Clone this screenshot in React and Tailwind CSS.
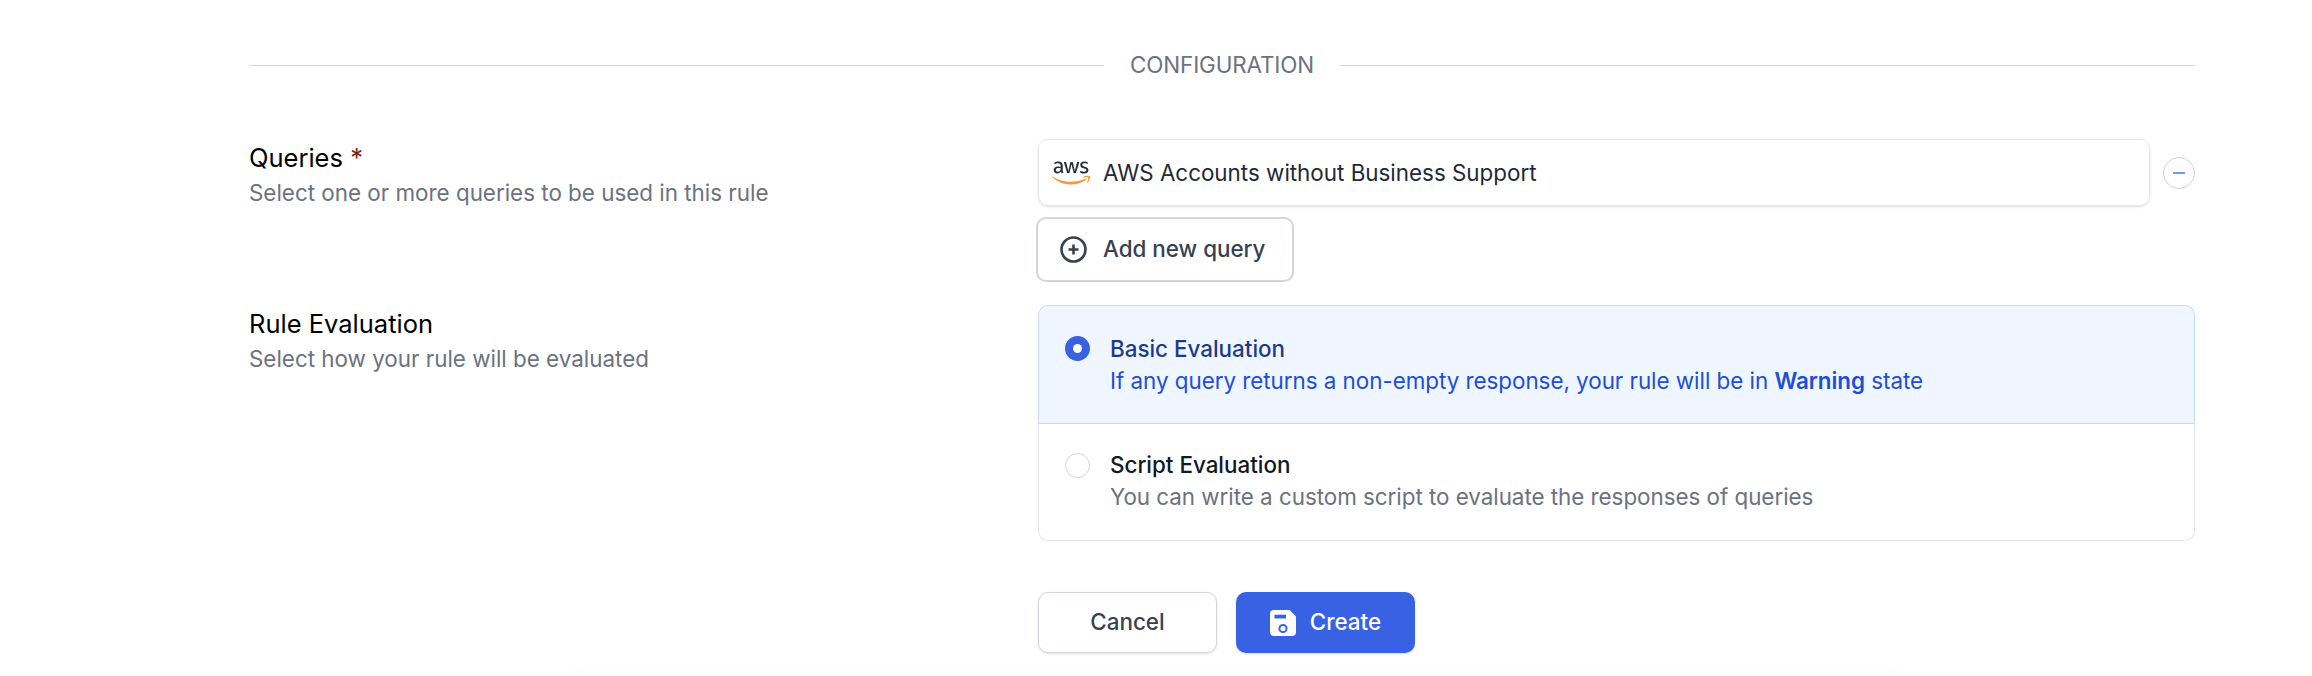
import { FaAws } from "react-icons/fa";

function Radio({ checked }) {
  return checked ? (
    <span className="mt-[3px] flex size-[25px] shrink-0 items-center justify-center rounded-full bg-[#3862e3]">
      <span className="size-[9px] rounded-full bg-white" />
    </span>
  ) : (
    <span className="mt-[4px] size-[25px] shrink-0 rounded-full border border-gray-300 bg-white" />
  );
}

function Label({ title, required, hint }) {
  return (
    <div className="w-[789px] shrink-0">
      <div className="text-[25.5px] leading-[38px] text-black">
        {title}
        {required && <span className="text-[#7f1d1d]"> *</span>}
      </div>
      <div className="text-[#6b7280] leading-[32px]">{hint}</div>
    </div>
  );
}

function SaveIcon() {
  return (
    <svg className="size-[26px]" viewBox="0 0 26 26" fill="none">
      <path d="M4 0H19.500L26 6.500V22A4 4 0 0 1 22 26H4A4 4 0 0 1 0 22V4A4 4 0 0 1 4 0Z" fill="#fff" />
      <path d="M4.500 4.700H16V8.500H4.500Z" fill="#3862e3" />
      <circle cx="13" cy="18.500" r="3.600" stroke="#3862e3" strokeWidth="2" />
    </svg>
  );
}

export default function App() {
  return (
    <div className="relative flex h-[676px] w-[2312px] flex-col overflow-hidden bg-white pl-[249px] pr-[117px] font-['Inter',sans-serif] text-[22.4px]">
      <svg className="absolute size-0">
        <linearGradient id="aws" x1="0" y1="0" x2="0" y2="1">
          <stop offset="0.600" stopColor="#252f3e" />
          <stop offset="0.600" stopColor="#f79a2f" />
        </linearGradient>
      </svg>
      <div className="absolute left-[560px] right-[400px] top-[700px] h-[80px] shadow-[0_0_50px_rgba(0,0,0,0.06)]" />

      <div className="mt-[48px] flex h-[34px] items-center">
        <div className="h-px flex-1 bg-gray-300" />
        <div className="w-[236px] text-center tracking-[-0.1px] text-[#6b7280]">CONFIGURATION</div>
        <div className="h-px flex-1 bg-gray-300" />
      </div>

      <div className="mt-[57px] flex h-[166px]">
        <Label title="Queries" required hint="Select one or more queries to be used in this rule" />
        <div className="flex flex-1 flex-col items-start">
          <div className="flex w-full items-center gap-[13px]">
            <div className="flex h-[67px] flex-1 items-center rounded-[10px] border border-gray-200 pl-[13px] text-[#1f2937] shadow-sm">
              <FaAws className="mr-[13px] h-[36px] w-[38px] fill-[url(#aws)]" />
              AWS Accounts without Business Support
            </div>
            <div className="flex size-[32px] items-center justify-center rounded-full border border-gray-300">
              <span className="h-[2px] w-[12px] bg-[#6f97f8]" />
            </div>
          </div>
          <button className="-ml-[2px] mt-[11px] flex h-[65px] w-[258px] items-center rounded-[10px] border-2 border-gray-300 pb-px pl-[22px] font-medium text-[#374151]">
            <svg className="mr-[16px] size-[27px]" viewBox="0 0 27 27" fill="none" stroke="currentColor" strokeWidth="2.600">
              <circle cx="13.500" cy="13.500" r="12" />
              <path d="M13.500 8.500V18.500M8.500 13.500H18.500" />
            </svg>
            Add new query
          </button>
        </div>
      </div>

      <div className="flex">
        <Label title="Rule Evaluation" hint="Select how your rule will be evaluated" />
        <div className="flex-1">
          <div className="flex h-[119px] gap-[20px] rounded-t-[10px] border border-[#bfdbfe] bg-[#eff6ff] pl-[26px] pt-[27px] leading-[32px]">
            <Radio checked />
            <div>
              <div className="font-medium text-[#1e3a8a]">Basic Evaluation</div>
              <div className="tracking-[-0.03px] text-[#1d4ed8]">
                If any query returns a non-empty response, your rule will be in <span className="font-semibold">Warning</span> state
              </div>
            </div>
          </div>
          <div className="flex h-[117px] gap-[20px] rounded-b-[10px] border border-t-0 border-gray-200 pl-[26px] pt-[25px] leading-[32px]">
            <Radio />
            <div>
              <div className="font-medium text-[#111827]">Script Evaluation</div>
              <div className="tracking-[-0.03px] text-[#6b7280]">You can write a custom script to evaluate the responses of queries</div>
            </div>
          </div>
          <div className="mt-[51px] flex gap-[19px] font-medium">
            <button className="flex h-[61px] w-[179px] items-center justify-center rounded-[10px] border border-gray-300 pb-[2px] text-[#374151] shadow-sm">
              Cancel
            </button>
            <button className="flex h-[61px] w-[179px] items-center justify-center gap-[14px] rounded-[10px] bg-[#3862e3] text-white shadow-sm">
              <SaveIcon />
              <span className="pb-[2px]">Create</span>
            </button>
          </div>
        </div>
      </div>
    </div>
  );
}
